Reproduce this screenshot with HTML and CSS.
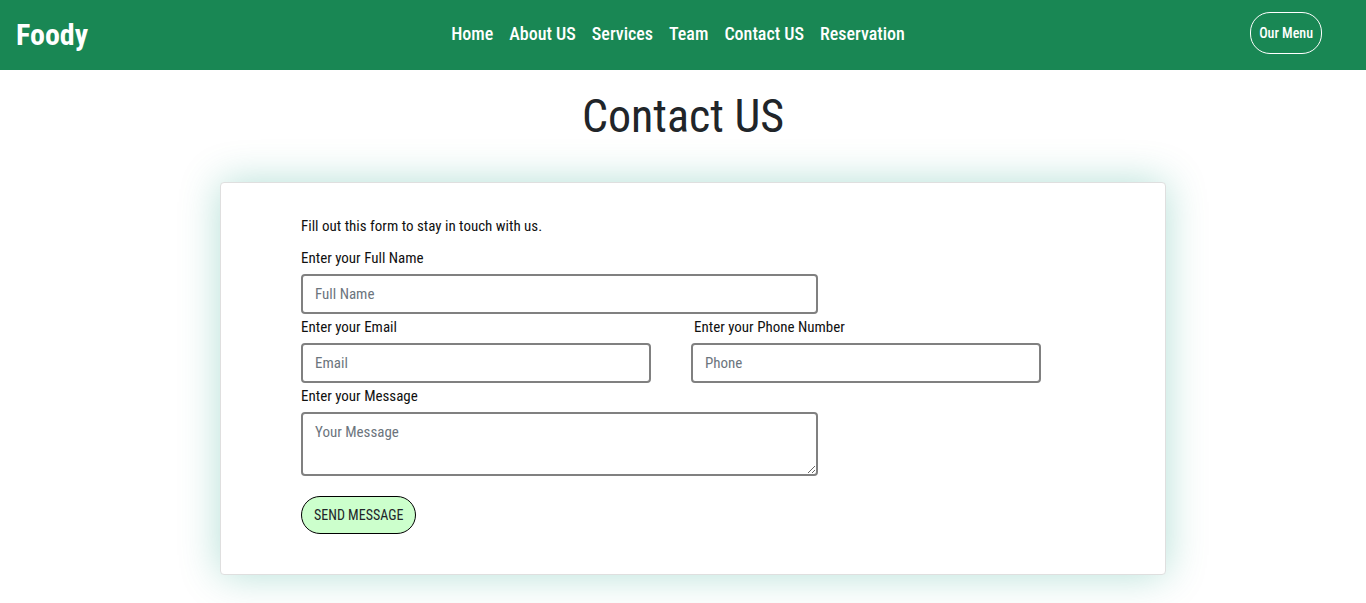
FILE: index.html
```html
<!DOCTYPE html>
<html lang="en">
<head>
  <meta charset="utf-8">
  <meta name="viewport" content="width=device-width, initial-scale=1">
  <title>Foody - Contact US</title>
  <link rel="stylesheet" href="styles.css">
</head>
<body>
  <header class="navbar">
    <a class="brand" href="#">Foody</a>
    <nav class="nav-links" aria-label="Main">
      <a href="#">Home</a>
      <a href="#">About US</a>
      <a href="#">Services</a>
      <a href="#">Team</a>
      <a href="#">Contact US</a>
      <a href="#">Reservation</a>
    </nav>
    <div class="nav-action">
      <button class="menu-button" type="button">Our Menu</button>
    </div>
  </header>
  <main class="contact">
    <h1 class="title">Contact US</h1>
    <form class="card">
      <p class="intro">Fill out this form to stay in touch with us.</p>
      <div class="field field-wide">
        <label for="name">Enter your Full Name</label>
        <input id="name" type="text" placeholder="Full Name">
      </div>
      <div class="field-row">
        <div class="field">
          <label for="email">Enter your Email</label>
          <input id="email" type="email" placeholder="Email">
        </div>
        <div class="field">
          <label class="label-inset" for="phone">Enter your Phone Number</label>
          <input id="phone" type="tel" placeholder="Phone">
        </div>
      </div>
      <div class="field field-wide">
        <label for="message">Enter your Message</label>
        <textarea id="message" rows="2" placeholder="Your Message"></textarea>
      </div>
      <button class="send-button" type="submit">SEND MESSAGE</button>
    </form>
  </main>
</body>
</html>
```
FILE: styles.css
```css
* {
  box-sizing: border-box;
}

body {
  margin: 0;
  background: #fff;
  color: #212529;
  font-family: "Roboto Condensed", "Liberation Sans Narrow", "DejaVu Sans Condensed", sans-serif;
  font-size: 15px;
  line-height: 24px;
}

button,
input,
textarea {
  font: inherit;
}

.navbar {
  display: grid;
  grid-template-columns: 1fr auto 1fr;
  align-items: center;
  min-height: 70px;
  padding: 0 16px 4px;
  background: #198754;
}

.navbar a {
  color: #fff;
  text-decoration: none;
}

.brand {
  padding-top: 4px;
  font-size: 30px;
  font-weight: 700;
  line-height: 48px;
}

.nav-links {
  display: flex;
  gap: 16px;
  padding: 2px 10px 0 0;
  font-size: 18px;
  font-weight: 500;
}

.nav-action {
  display: flex;
  justify-content: flex-end;
  padding-right: 28px;
}

.menu-button {
  padding: 8px;
  border: 1px solid #fff;
  border-radius: 20px;
  background: transparent;
  color: #fff;
  font-size: 14px;
  font-weight: 500;
}

.contact {
  padding: 16px 20px 28px 40px;
}

.title {
  margin: 0 20px 36px 0;
  font-size: 46px;
  font-weight: 400;
  line-height: 60px;
  text-align: center;
}

.card {
  max-width: 946px;
  margin: 0 auto;
  padding: 31px 80px 40px;
  border: 1px solid #dfdfdf;
  border-radius: 4px;
  background: #fff;
  box-shadow: 0 0 40px rgba(0, 150, 120, 0.3);
}

.intro {
  margin: 0 0 8px;
  color: #111;
}

.field {
  display: flex;
  flex-direction: column;
  color: #111;
}

.field label {
  padding-bottom: 4px;
}

.field + .field-row label,
.field-row + .field label {
  padding-top: 1px;
}

.field-wide {
  width: 66%;
}

.field-row {
  display: grid;
  grid-template-columns: 1fr 1fr;
  gap: 40px;
  max-width: 740px;
}

.label-inset {
  padding-left: 3px;
}

.field input,
.field textarea {
  width: 100%;
  padding: 6px 12px;
  border: 2px solid #808080;
  border-radius: 4px;
  background: #fff;
  color: #212529;
}

.field textarea {
  display: block;
  min-height: 64px;
  resize: vertical;
}

.field ::placeholder {
  color: #6c757d;
  opacity: 1;
}

.send-button {
  margin-top: 20px;
  padding: 6px 12px;
  border: 1px solid #000;
  border-radius: 20px;
  background: #ccffcc;
  color: #212529;
  font-size: 14px;
}
```
